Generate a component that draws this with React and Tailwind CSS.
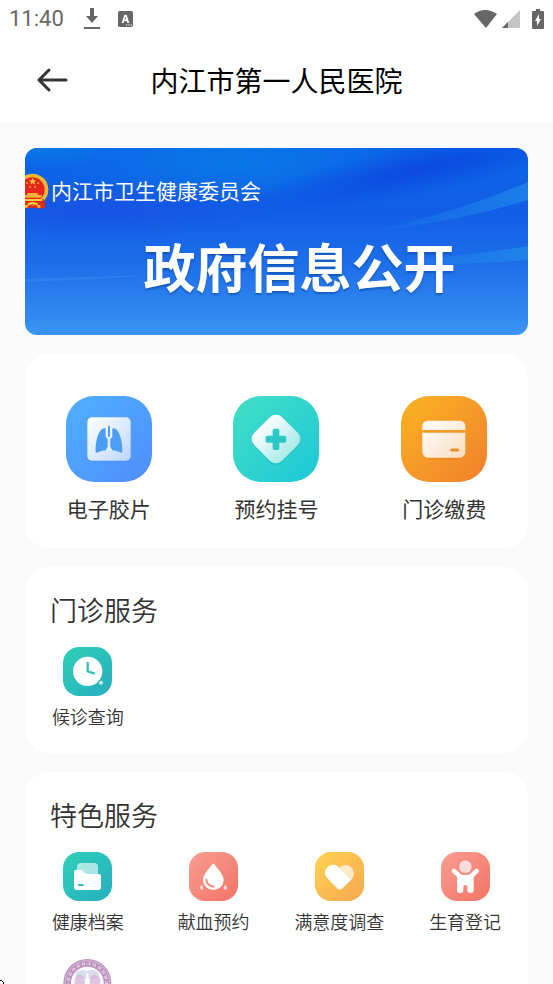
import { useState } from "react";

// main entries
function FilmIcon() {
  return (
    <svg viewBox="0 0 258 258" className="h-full w-full">
      <defs>
        <linearGradient id="film" x1="0" y1="0" x2="1" y2="1">
          <stop offset="0" stopColor="#ffffff" />
          <stop offset="1" stopColor="#bcd8fc" />
        </linearGradient>
      </defs>
      <rect x="66" y="70" width="126" height="130" rx="16" fill="#3f83ee" opacity="0.25" />
      <rect x="64" y="64" width="130" height="130" rx="14" fill="url(#film)" />
      <g fill="#4b9df6">
        <path d="M119 97C101 93 88 128 89 168Q91 172 98 168Q108 164 119 163L125 152V128L119 122Z" />
        <path d="M139 97C157 93 170 128 169 168Q167 172 160 168Q150 164 139 163L133 152V128L139 122Z" />
      </g>
      <path d="M122 95V122L129 128L136 122V95" fill="none" stroke="#eaf4ff" strokeWidth="4" />
      <path d="M129 92V120" stroke="#4b9df6" strokeWidth="6" strokeLinecap="round" />
      <path d="M129 128V148L125 163H133L129 148" fill="#e4effe" stroke="#e4effe" strokeWidth="4" />
    </svg>
  );
}

function RegisterIcon() {
  return (
    <svg viewBox="0 0 258 258" className="h-full w-full">
      <defs>
        <linearGradient id="register" x1="0" y1="0.5" x2="1" y2="0.5">
          <stop offset="0" stopColor="#ffffff" />
          <stop offset="1" stopColor="#a9e9e9" />
        </linearGradient>
      </defs>
      <rect x="70" y="76" width="118" height="118" rx="25" transform="rotate(45 129 135)" fill="#14aebb" opacity="0.25" />
      <rect x="70" y="70" width="118" height="118" rx="25" transform="rotate(45 129 129)" fill="url(#register)" />
      <path d="M98 124Q98 119 103 119H119V103Q119 98 124 98H134Q139 98 139 103V119H155Q160 119 160 124V135Q160 140 155 140H139V157Q139 162 134 162H124Q119 162 119 157V140H103Q98 140 98 135Z" fill="#2cc8c6" />
    </svg>
  );
}

function PayIcon() {
  return (
    <svg viewBox="0 0 258 258" className="h-full w-full">
      <defs>
        <linearGradient id="pay" x1="0" y1="0" x2="1" y2="1">
          <stop offset="0" stopColor="#ffffff" />
          <stop offset="1" stopColor="#fbdcbe" />
        </linearGradient>
      </defs>
      <rect x="66" y="82" width="125" height="109" rx="18" fill="#d96f10" opacity="0.2" />
      <rect x="64" y="74" width="129" height="111" rx="16" fill="url(#pay)" />
      <path d="M64 106H193" stroke="#f49a25" strokeWidth="8" />
      <path d="M152 162H170" stroke="#f0902a" strokeWidth="9" strokeLinecap="round" />
    </svg>
  );
}

// small service icons
function ClockIcon() {
  return (
    <svg viewBox="0 0 147 147" className="h-full w-full">
      <circle cx="74" cy="73" r="44" fill="#fff" />
      <path d="M74 48V73L93 79" fill="none" stroke="#2dc3bb" strokeWidth="7" strokeLinecap="round" strokeLinejoin="round" />
      <circle cx="114" cy="107" r="9" fill="#29b7bd" />
      <circle cx="114" cy="107" r="6" fill="#fff" opacity="0.8" />
    </svg>
  );
}

function FolderIcon() {
  return (
    <svg viewBox="0 0 147 147" className="h-full w-full">
      <rect x="42" y="33" width="63" height="50" rx="12" fill="#fff" opacity="0.6" />
      <path d="M39 53H55Q58 53 60 57Q64 66 72 66H108Q114 66 114 72V106Q114 114 106 114H41Q33 114 33 106V59Q33 53 39 53Z" fill="#fff" />
      <path d="M48 99H59" stroke="#2bbcbc" strokeWidth="6" strokeLinecap="round" />
    </svg>
  );
}

function BloodIcon() {
  return (
    <svg viewBox="0 0 147 147" className="h-full w-full">
      <path d="M69 38Q73 33 77 38C87 51 104 68 104 84A31 30 0 0 1 42 84C42 68 59 51 69 38Z" fill="#fff" />
      <path d="M52 83Q54 101 74 104" fill="none" stroke="#f58a7d" strokeWidth="6" strokeLinecap="round" />
      <g fill="#fff" opacity="0.7">
        <path d="M38 98Q44 105 43 108A5 5 0 0 1 33 108Q32 105 38 98Z" />
        <path d="M109 98Q115 105 114 108A5 5 0 0 1 104 108Q103 105 109 98Z" />
      </g>
    </svg>
  );
}

function HeartIcon() {
  return (
    <svg viewBox="0 0 147 147" className="h-full w-full">
      <path d="M74 47C82 37 98 36 107 44C119 54 120 70 109 83Z" fill="#fff" opacity="0.7" />
      <path d="M37 79C28 68 27 54 38 45C48 36 61 36 70 44L109 83L80 111Q74 116 68 111Z" fill="#fff" />
    </svg>
  );
}

function ChildIcon() {
  return (
    <svg viewBox="0 0 147 147" className="h-full w-full">
      <path d="M39 57L58 74M107 57L88 74" stroke="#fff" strokeWidth="14" strokeLinecap="round" />
      <path d="M48 68H98V115Q98 123 90 123H87Q79 123 79 115V104Q79 99 73 99Q67 99 67 104V115Q67 123 59 123H56Q48 123 48 115Z" fill="#fff" />
      <circle cx="73" cy="44" r="25" fill="#f68a80" />
      <circle cx="73" cy="44" r="19" fill="#fff" opacity="0.7" />
    </svg>
  );
}

function SealIcon() {
  return (
    <svg viewBox="0 0 147 147" className="h-full w-full">
      <circle cx="73" cy="75" r="72" fill="#bd93c0" />
      <circle cx="73" cy="75" r="67" fill="none" stroke="#e0cbe3" strokeWidth="2" />
      <circle cx="73" cy="75" r="58" fill="none" stroke="#e6d5e8" strokeWidth="9" strokeDasharray="3 2 4 8" />
      <circle cx="73" cy="75" r="49" fill="#fff" />
      <ellipse cx="58" cy="50" rx="20" ry="14" fill="#d9dcee" />
      <ellipse cx="88" cy="50" rx="20" ry="14" fill="#d9dcee" />
      <ellipse cx="50" cy="70" rx="16" ry="20" fill="#d8b6dc" opacity="0.8" />
      <ellipse cx="96" cy="70" rx="16" ry="20" fill="#d8b6dc" opacity="0.8" />
      <path d="M73 46V110" stroke="#fff" strokeWidth="6" />
    </svg>
  );
}

function Emblem() {
  return (
    <svg viewBox="0 0 72 108" className="h-9 w-6 shrink-0">
      <path d="M0 84H60V104Q40 108 20 104L0 106Z" fill="#dd2418" />
      <circle cx="22" cy="50" r="48" fill="#f3b733" />
      <circle cx="22" cy="50" r="37" fill="#e5261c" />
      <path d="M23 14L26 22H34L28 27L30 35L23 30L16 35L18 27L12 22H20Z" fill="#fbc93a" />
      <g fill="#f5b23a">
        <circle cx="6" cy="30" r="3" />
        <circle cx="15" cy="42" r="3" />
        <circle cx="30" cy="42" r="3" />
        <circle cx="40" cy="31" r="3" />
        <path d="M8 60H36L40 66H50V74H0V66H6Z" />
      </g>
      <path d="M0 78H56L60 104Q50 108 44 100L36 104L22 96L10 104L0 98Z" fill="#df2a1b" />
      <path d="M0 78H52V84H0ZM8 90L22 86L38 90V98L22 94L8 98ZM0 96H8V104H0ZM38 96H46V104H38Z" fill="#fbc93a" />
    </svg>
  );
}

function BannerArt() {
  return (
    <svg viewBox="0 0 504 187" preserveAspectRatio="none" className="absolute inset-0 h-full w-full">
      <defs>
        <linearGradient id="sky" x1="0" y1="0" x2="0" y2="1">
          <stop offset="0" stopColor="#0a66e6" />
          <stop offset="0.35" stopColor="#125ee6" />
          <stop offset="0.65" stopColor="#1f70ea" />
          <stop offset="1" stopColor="#3a95f3" />
        </linearGradient>
        <linearGradient id="ray" x1="0" y1="0" x2="1" y2="0">
          <stop offset="0" stopColor="#1f88ec" stopOpacity="0" />
          <stop offset="1" stopColor="#1f88ec" stopOpacity="0.75" />
        </linearGradient>
        <radialGradient id="glow">
          <stop offset="0" stopColor="#0a7ae9" stopOpacity="0.9" />
          <stop offset="1" stopColor="#0a7ae9" stopOpacity="0" />
        </radialGradient>
        <radialGradient id="deep">
          <stop offset="0" stopColor="#0c42de" stopOpacity="0.8" />
          <stop offset="1" stopColor="#0c42de" stopOpacity="0" />
        </radialGradient>
        <radialGradient id="dusk">
          <stop offset="0" stopColor="#1a4fe2" stopOpacity="0.7" />
          <stop offset="1" stopColor="#1a4fe2" stopOpacity="0" />
        </radialGradient>
      </defs>
      <rect width="504" height="187" fill="url(#sky)" />
      <ellipse cx="80" cy="60" rx="190" ry="30" fill="url(#dusk)" />
      <ellipse cx="210" cy="14" rx="170" ry="42" fill="url(#glow)" />
      <ellipse cx="20" cy="0" rx="80" ry="20" fill="url(#glow)" />
      <ellipse cx="400" cy="20" rx="190" ry="26" transform="rotate(-12 400 20)" fill="url(#deep)" />
      <path d="M335 86Q430 66 504 34V52Q430 74 335 86Z" fill="url(#ray)" />
      <path d="M310 118Q420 112 504 98V112Q420 118 310 118Z" fill="url(#ray)" />
      <path d="M0 131Q60 129 130 127Q60 132 0 134Z" fill="#3b93f0" opacity="0.4" />
    </svg>
  );
}

const entries = [
  { name: "电子胶片", icon: <FilmIcon />, bg: "bg-linear-to-br from-[#4fb0ff] to-[#4f8dfc]" },
  { name: "预约挂号", icon: <RegisterIcon />, bg: "bg-linear-to-br from-[#42dec4] to-[#18c8d8]" },
  { name: "门诊缴费", icon: <PayIcon />, bg: "bg-linear-to-br from-[#fab422] to-[#f07e2b]" },
];

const clinic = [
  { name: "候诊查询", icon: <ClockIcon />, bg: "bg-linear-to-br from-[#30d0b6] to-[#27aec0]" },
];

const special = [
  { name: "健康档案", icon: <FolderIcon />, bg: "bg-linear-to-br from-[#30d0b6] to-[#27aec0]" },
  { name: "献血预约", icon: <BloodIcon />, bg: "bg-linear-to-br from-[#f99c91] to-[#f17466]" },
  { name: "满意度调查", icon: <HeartIcon />, bg: "bg-linear-to-br from-[#ffd350] to-[#f5a750]" },
  { name: "生育登记", icon: <ChildIcon />, bg: "bg-linear-to-br from-[#f99c91] to-[#f17466]" },
  { name: "", icon: <SealIcon />, bg: "" },
];

function StatusBar() {
  return (
    <div className="flex h-[37px] items-center pl-[9px] pr-[9px] text-[#666]">
      <span className="font-[Roboto] text-[22px] leading-6">11:40</span>
      <svg viewBox="0 0 16 21" className="ml-5 h-[21px] w-4" fill="currentColor">
        <path d="M6 0H10V8H14L8 15L2 8H6ZM0 19H16V21H0Z" />
      </svg>
      <svg viewBox="0 0 45 48" className="ml-[18px] h-4 w-[15px]">
        <rect width="45" height="48" rx="5" fill="#666" />
        <path d="M11 36L19 11H26L34 36H28L26 30H19L17 36ZM20 25H25L22 17Z" fill="#fff" />
        <path d="M24 42H42" stroke="#fff" strokeWidth="3" strokeDasharray="4 3" />
      </svg>
      <svg viewBox="0 0 23 18" className="ml-auto h-[18px] w-[23px]" fill="currentColor">
        <path d="M0 4Q11 -4 23 4L12 18Z" />
      </svg>
      <svg viewBox="0 0 18 18" className="ml-[5px] h-[18px] w-[18px]">
        <path d="M0 18L18 0V18Z" fill="#c4c4c4" />
        <path d="M0 18L6 12V18Z" fill="#666" />
      </svg>
      <svg viewBox="0 0 12 20" className="ml-3 h-5 w-3">
        <path d="M4 0H8V2H11Q12 2 12 3V19Q12 20 11 20H1Q0 20 0 19V3Q0 2 1 2H4Z" fill="#666" />
        <path d="M7 5L3 12H5V17L9 10H7Z" fill="#fff" />
      </svg>
    </div>
  );
}

function Section({ title, items }) {
  return (
    <section className="rounded-3xl bg-white pt-[25px] pb-[25px]">
      <h2 className="px-[25px] text-[27px] leading-9 font-[350]">{title}</h2>
      <div className="mt-[19px] grid grid-cols-4 gap-y-[25px]">
        {items.map((item, i) => (
          <a key={i} href="#" className="flex flex-col items-center gap-2">
            <span className={"h-[49px] w-[49px] rounded-2xl " + item.bg}>{item.icon}</span>
            <span className="h-6 text-[18px] leading-6 font-[350] whitespace-nowrap">{item.name}</span>
          </a>
        ))}
      </div>
    </section>
  );
}

export default function App() {
  const [title] = useState("内江市第一人民医院");

  return (
    <div className="relative flex h-screen flex-col overflow-hidden bg-[#fafafa] font-['Noto_Sans_CJK_SC',sans-serif] text-[#333]">
      <header className="shrink-0 bg-white">
        <StatusBar />
        <div className="grid h-[86px] grid-cols-[80px_1fr_80px] items-center">
          <button type="button" aria-label="返回" className="pl-9">
            <svg viewBox="0 0 32 24" className="h-6 w-8" fill="none" stroke="#333" strokeWidth="3" strokeLinecap="round" strokeLinejoin="round">
              <path d="M30 12H3M13 2L3 12L13 22" />
            </svg>
          </button>
          <h1 className="text-center text-[28px] leading-10 font-normal text-black">{title}</h1>
        </div>
      </header>

      <main className="flex min-h-0 flex-1 flex-col gap-[19px] overflow-y-auto px-[25px] pt-[25px] [scrollbar-width:none]">
        <a href="#" className="relative block shrink-0 overflow-hidden rounded-xl pt-[25px] pb-[33px] text-white">
          <BannerArt />
          <div className="relative flex gap-[2px]">
            <Emblem />
            <span className="text-[21px] leading-[34px]">内江市卫生健康委员会</span>
          </div>
          <div className="relative mt-[21px] pl-[46px] text-center text-[52px] leading-[72px] font-bold text-shadow-[0_2px_2px_#0b479c99]">
            政府信息公开
          </div>
        </a>

        <nav className="grid shrink-0 grid-cols-3 rounded-3xl bg-white pt-[42px] pb-[25px]">
          {entries.map((item) => (
            <a key={item.name} href="#" className="flex flex-col items-center gap-[11px]">
              <span className={"h-[86px] w-[86px] rounded-[28px] " + item.bg}>{item.icon}</span>
              <span className="text-[21px] leading-[30px]">{item.name}</span>
            </a>
          ))}
        </nav>

        <Section title="门诊服务" items={clinic} />
        <Section title="特色服务" items={special} />
      </main>

      {/* pointer tip at the screen edge */}
      <svg viewBox="0 0 4 4" className="absolute bottom-0 left-0 h-1 w-1">
        <path d="M0 0H2V1H3V2H4V4H3V2H2V1H0Z" fill="#000" />
      </svg>
    </div>
  );
}
